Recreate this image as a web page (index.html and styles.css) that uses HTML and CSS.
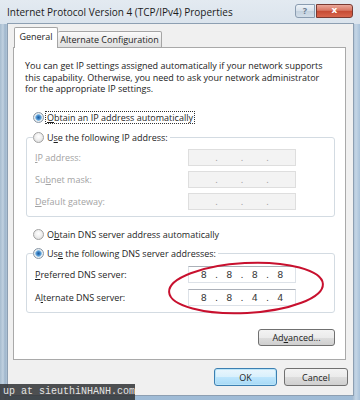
FILE: index.html
```html
<!DOCTYPE html>
<html>
<head>
<meta charset="utf-8">
<link rel="stylesheet" href="styles.css">
</head>
<body>
<div class="window">
  <div class="titlebar">
    <span class="title">Internet Protocol Version 4 (TCP/IPv4) Properties</span>
    <div class="caption">
      <span class="cap-help">?</span>
      <span class="cap-close">x</span>
    </div>
  </div>
  <div class="client">
    <div class="tabs">
      <div class="tab active">General</div>
      <div class="tab">Alternate Configuration</div>
    </div>
    <div class="panel">
      <p class="intro">You can get IP settings assigned automatically if your network supports<br>this capability. Otherwise, you need to ask your network administrator<br>for the appropriate IP settings.</p>

      <div class="radio r1"><span class="circle checked"></span><span class="rtext focus"><u>O</u>btain an IP address automatically</span></div>

      <fieldset class="group">
        <legend><span class="radio"><span class="circle"></span><span class="rtext">U<u>s</u>e the following IP address:</span></span></legend>
        <div class="rows">
          <span class="lbl disabled"><u>I</u>P address:</span>
          <div class="ip disabled"><span class="seg"></span><span class="dot">.</span><span class="seg"></span><span class="dot">.</span><span class="seg"></span><span class="dot">.</span><span class="seg"></span></div>
          <span class="lbl disabled">Su<u>b</u>net mask:</span>
          <div class="ip disabled"><span class="seg"></span><span class="dot">.</span><span class="seg"></span><span class="dot">.</span><span class="seg"></span><span class="dot">.</span><span class="seg"></span></div>
          <span class="lbl disabled"><u>D</u>efault gateway:</span>
          <div class="ip disabled"><span class="seg"></span><span class="dot">.</span><span class="seg"></span><span class="dot">.</span><span class="seg"></span><span class="dot">.</span><span class="seg"></span></div>
        </div>
      </fieldset>

      <div class="radio r3"><span class="circle"></span><span class="rtext">O<u>b</u>tain DNS server address automatically</span></div>

      <fieldset class="group g2">
        <legend><span class="radio"><span class="circle checked"></span><span class="rtext">Us<u>e</u> the following DNS server addresses:</span></span></legend>
        <div class="rows dns">
          <span class="lbl"><u>P</u>referred DNS server:</span>
          <div class="ip"><span class="seg">8</span><span class="dot">.</span><span class="seg">8</span><span class="dot">.</span><span class="seg">8</span><span class="dot">.</span><span class="seg">8</span></div>
          <span class="lbl">A<u>l</u>ternate DNS server:</span>
          <div class="ip"><span class="seg">8</span><span class="dot">.</span><span class="seg">8</span><span class="dot">.</span><span class="seg">4</span><span class="dot">.</span><span class="seg">4</span></div>
        </div>
      </fieldset>

      <div class="adv-row"><button class="btn adv">Ad<u>v</u>anced...</button></div>
    </div>
    <div class="actions">
      <button class="btn default">OK</button>
      <button class="btn">Cancel</button>
    </div>
  </div>
  <svg class="mark" width="360" height="400" viewBox="0 0 360 400">
    <ellipse cx="246" cy="288" rx="77" ry="25" transform="rotate(-3 246 288)" fill="none" stroke="#c8102e" stroke-width="2"/>
  </svg>
  <div class="watermark">up at sieuthiNHANH.com</div>
</div>
</body>
</html>
```
FILE: styles.css
```css
* { box-sizing: border-box; }
html, body { margin: 0; padding: 0; }
body {
  width: 360px;
  height: 400px;
  overflow: hidden;
  font-family: "Open Sans", "Noto Sans", sans-serif;
  font-size: 9px;
  color: #1e1e1e;
  background: #fff;
}
.window {
  position: relative;
  width: 360px;
  height: 400px;
  padding: 0 7px 5px 8px;
  display: flex;
  flex-direction: column;
  background:
    linear-gradient(90deg, #a7bccf 0, #c1d1e0 3px, #9fb6cc 5px, #b8cadb 8px, transparent 8px, transparent 352px, #9fb7cf 352px, #c4d5e5 356px, #a9c2da 360px),
    linear-gradient(180deg, #d9e3ec 0, #bccddd 40%, #9fbbd6 100%);
}
.titlebar {
  height: 24px;
  margin: 0 -7px 0 -8px;
  padding: 0 7px 0 7px;
  display: flex;
  align-items: flex-start;
  background: linear-gradient(180deg, #e3eaf1 0, #dbe4ed 100%);
}
.title {
  margin-top: 6px;
  font-size: 10px;
  line-height: 13px;
  color: #1b1b1b;
}
.caption {
  margin-left: auto;
  margin-top: 4px;
  display: flex;
  gap: 1px;
}
.cap-help {
  width: 20px;
  height: 14px;
  border: 1px solid #8a9cb0;
  border-radius: 3px 0 0 3px;
  background: linear-gradient(180deg, #eef3f8 0, #d6e0ea 50%, #c3d1de 51%, #d3dee9 100%);
  color: #6c7c8e;
  font-size: 9px;
  line-height: 12px;
  text-align: center;
  font-weight: bold;
}
.cap-close {
  width: 37px;
  height: 14px;
  border: 1px solid #7a3a32;
  border-radius: 0 3px 3px 0;
  background: linear-gradient(180deg, #eaa89b 0, #d97764 45%, #c54a33 50%, #d9664d 100%);
  color: #fff;
  font-family: "DejaVu Sans", sans-serif;
  font-weight: bold;
  font-size: 9px;
  line-height: 11px;
  text-align: center;
}
.client {
  flex: 1;
  background: #f0f0f0;
  padding: 3px 5px 0 5px;
  box-shadow: 0 0 0 1px #8d9fb2;
}
.tabs {
  display: flex;
  align-items: flex-end;
  margin-left: 1px;
  margin-bottom: -1px;
}
.tab {
  height: 17px;
  width: 104px;
  border: 1px solid #a5a5a5;
  border-left: none;
  background: linear-gradient(180deg, #fbfbfb 0, #ececec 50%, #e0e0e0 100%);
  text-align: center;
  line-height: 15px;
  border-radius: 2px 2px 0 0;
  white-space: nowrap;
}
.tab.active {
  position: relative;
  z-index: 1;
  height: 21px;
  width: 44px;
  border-left: 1px solid #a5a5a5;
  border-bottom: none;
  background: #fff;
  line-height: 18px;
}
.panel {
  height: 313px;
  margin-right: 2px;
  border: 1px solid #a9a9a9;
  background: #fff;
  padding: 12px 9px 0 11px;
}
.intro {
  margin: 0;
  line-height: 11.5px;
  color: #222;
  white-space: nowrap;
}
.radio {
  display: flex;
  align-items: center;
  height: 12px;
  margin-left: 8px;
  white-space: nowrap;
}
.r1 { margin-top: 17px; }
legend .radio { margin: 0; }
.circle {
  width: 11px;
  height: 11px;
  border-radius: 50%;
  border: 1px solid #a2a2a2;
  background: radial-gradient(circle at 50% 40%, #ffffff 0, #f0f0f0 45%, #d6d6d6 100%);
  flex: none;
}
.circle.checked {
  border-color: #8a98a6;
  background: radial-gradient(circle at 50% 50%, #1e5c9c 0, #3f86c9 1.8px, #8cc0e6 3px, #e9eef2 3.6px, #d8dde2 100%);
}
.rtext {
  margin-left: 3px;
  line-height: 11px;
}
.focus {
  outline: 1px dotted #333;
  outline-offset: 0;
  padding: 0 1px;
  margin-left: 2px;
}
.group {
  width: 309px;
  margin: 8px 0 0 1px;
  border: 1px solid #d3dbe2;
  border-radius: 3px;
  padding: 5px 8px 6px 8px;
}
.group legend {
  padding: 0 2px 0 0;
  margin-left: -2px;
  height: 12px;
}
.rows {
  display: grid;
  grid-template-columns: 153px 108px;
  grid-auto-rows: 17px;
  row-gap: 5px;
  align-items: center;
}
.rows.dns { row-gap: 6px; }
.g2 { margin-top: 7px; padding-top: 6px; }
.r3 { margin-top: 12px; }
.lbl { line-height: 11px; white-space: nowrap; }
.lbl.disabled { color: #a3a3a3; }
.ip {
  height: 17px;
  width: 108px;
  display: flex;
  align-items: center;
  padding: 0 4px;
  background: #fff;
  border: 1px solid #dde2e8;
  border-top-color: #abb0b8;
  font-family: "DejaVu Sans", sans-serif;
  font-size: 9.5px;
  color: #3a3a3a;
}
.ip.disabled {
  background: #f3f3f3;
  border-color: #dedede;
  color: #a8a8a8;
}
.seg { width: 22px; text-align: center; }
.dot { width: 4px; text-align: center; }
.adv-row {
  width: 310px;
  display: flex;
  justify-content: flex-end;
  margin-top: 16px;
}
.btn {
  height: 18px;
  width: 64px;
  padding: 0;
  border: 1px solid #707070;
  border-radius: 3px;
  background: linear-gradient(180deg, #f3f3f3 0, #ebebeb 50%, #dddddd 51%, #cfcfcf 100%);
  font-family: "Open Sans", "Noto Sans", sans-serif;
  font-size: 9px;
  color: #1e1e1e;
  line-height: 15px;
}
.btn.adv { width: 77px; height: 17px; }
.btn.default {
  width: 63px;
  border-color: #3c7fb1;
  box-shadow: inset 0 0 0 1px #b9e4f8;
  background: linear-gradient(180deg, #eaf6fd 0, #d9f0fc 50%, #bee6fd 51%, #a7d9f5 100%);
}
.actions {
  display: flex;
  justify-content: flex-end;
  gap: 7px;
  margin-top: 8px;
}
.mark {
  position: absolute;
  left: 0;
  top: 0;
  pointer-events: none;
}
.watermark {
  position: absolute;
  left: 0;
  bottom: 0;
  width: 135px;
  height: 16px;
  padding-left: 3px;
  background: rgba(50, 52, 55, 0.86);
  color: #e4e4e4;
  font-family: "Liberation Mono", monospace;
  font-size: 10px;
  line-height: 16px;
  white-space: nowrap;
  overflow: hidden;
}
```
